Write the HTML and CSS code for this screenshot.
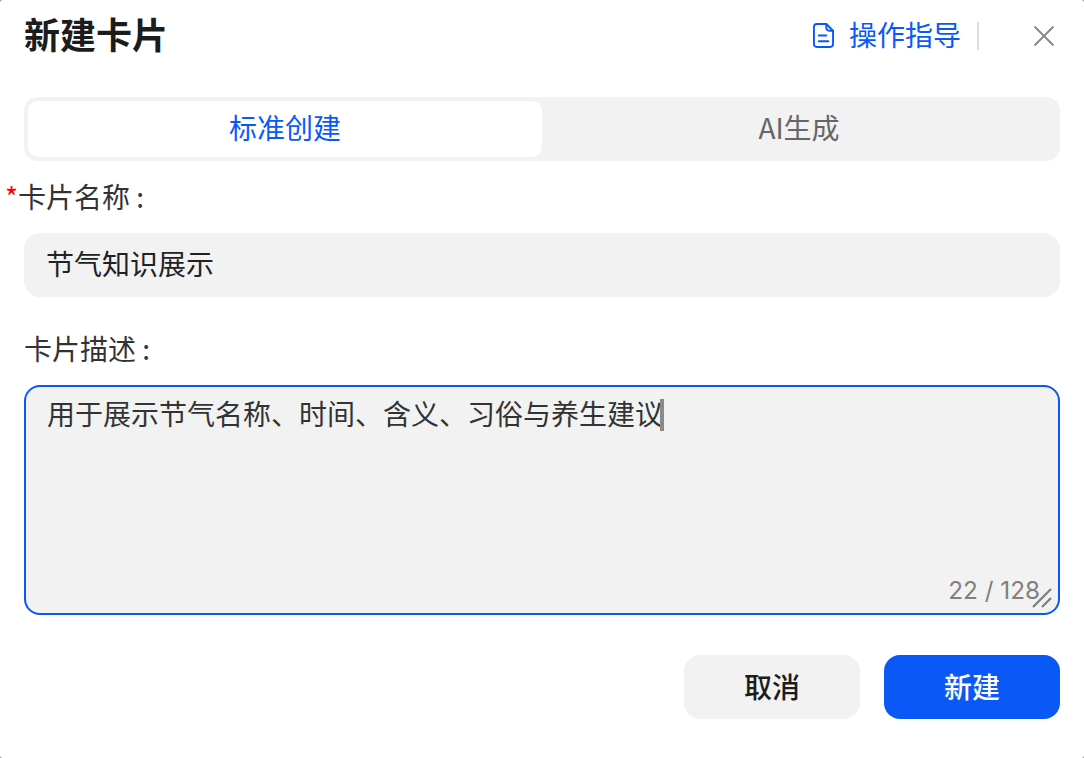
FILE: index.html
```html
<!DOCTYPE html>
<html lang="zh-CN">
<head>
<meta charset="utf-8">
<title>新建卡片</title>
<link rel="stylesheet" href="styles.css">
</head>
<body>
<main class="dialog">
  <header class="header">
    <h1 class="title">新建卡片</h1>
    <div class="actions">
      <a class="guide">
        <svg class="guide-icon" viewBox="0 0 22 26" fill="none" stroke="currentColor" stroke-width="2" stroke-linejoin="round" stroke-linecap="round">
          <path d="M4 1h10l7 7v14a3 3 0 0 1-3 3H4a3 3 0 0 1-3-3V4a3 3 0 0 1 3-3z"/>
          <path d="M14 1v4a3 3 0 0 0 3 3h4"/>
          <path d="M6 13h8M6 19h10"/>
        </svg>
        <span>操作指导</span>
      </a>
      <span class="divider"></span>
      <svg class="close" viewBox="0 0 20 20" fill="none" stroke="#8a8a8a" stroke-width="2">
        <path d="M0.5 0.5l19 19M19.5 0.5l-19 19"/>
      </svg>
    </div>
  </header>

  <div class="tabs">
    <div class="tab tab-active">标准创建</div>
    <div class="tab">AI生成</div>
  </div>

  <div class="label label-required"><span class="star">*</span>卡片名称 :</div>
  <div class="input">节气知识展示</div>

  <div class="label label-second">卡片描述 :</div>
  <div class="textarea">
    <div class="textarea-text">用于展示节气名称、时间、含义、习俗与养生建议<span class="caret"></span></div>
    <span class="counter">22 / 128</span>
    <svg class="resize" viewBox="0 0 20 20" fill="none" stroke="#808080" stroke-width="2.4">
      <path d="M1 19L19 1M10 19L19 10"/>
    </svg>
  </div>

  <footer class="footer">
    <button class="btn btn-cancel">取消</button>
    <button class="btn btn-primary">新建</button>
  </footer>
</main>
</body>
</html>
```
FILE: styles.css
```css
* { box-sizing: border-box; }

html, body {
  margin: 0;
  height: 100%;
  background: #9a9a9a;
}

body {
  font-family: "Noto Sans CJK SC", "Inter", sans-serif;
  color: #2b2b2b;
  overflow: hidden;
}

.dialog {
  width: 1084px;
  height: 758px;
  padding: 0 24px;
  display: flex;
  flex-direction: column;
  background: #fff;
  border-radius: 3px;
}

.header {
  height: 97px;
  padding-bottom: 26px;
  display: flex;
  align-items: center;
  justify-content: space-between;
}

.title {
  margin: 0 0 4px;
  font-size: 36px;
  line-height: 67px;
  font-weight: 700;
  color: #1c1c1c;
}

.actions {
  display: flex;
  align-items: center;
}

.guide {
  display: flex;
  align-items: center;
  gap: 15px;
  color: #0a59f7;
  font-size: 28px;
  line-height: 36px;
  padding-bottom: 4px;
}

.guide-icon {
  width: 21px;
  height: 25px;
  margin-top: 4px;
}

.divider {
  width: 2px;
  height: 28px;
  margin-left: 16px;
  background: #d9dde3;
}

.close {
  width: 20px;
  height: 20px;
  margin-left: 55px;
  margin-right: 6px;
}

.tabs {
  height: 64px;
  padding: 4px;
  border-radius: 14px;
  background: #f2f2f2;
  display: grid;
  grid-template-columns: 1fr 1fr;
}

.tab {
  font-size: 28px;
  line-height: 52px;
  text-align: center;
  color: #666;
  border-radius: 10px;
}

.tab-active {
  background: #fff;
  color: #0a59f7;
}

.label {
  font-size: 28px;
  line-height: 36px;
  color: #333;
}

.label-required {
  margin-top: 17px;
  margin-left: -19px;
  margin-bottom: 3px;
}

.label-second {
  margin-top: 33px;
  margin-bottom: 3px;
}

.star {
  color: #f00;
}

.input {
  margin-top: 16px;
  height: 64px;
  padding: 0 22px;
  border-radius: 16px;
  background: #f2f2f2;
  font-size: 28px;
  line-height: 60px;
  color: #222;
}

.textarea {
  position: relative;
  margin-top: 16px;
  height: 230px;
  padding: 6px 21px;
  border: 2px solid #0a59f7;
  border-radius: 16px;
  background: #f2f2f2;
  font-size: 28px;
  line-height: 40px;
  color: #333;
}

.textarea-text {
  display: flex;
  align-items: center;
}

.caret {
  flex: none;
  width: 4px;
  height: 32px;
  margin-left: -3px;
  margin-top: 4px;
  background: #8a8a8a;
}

.counter {
  position: absolute;
  right: 18px;
  bottom: 7px;
  font-family: "Inter", sans-serif;
  font-size: 24.3px;
  line-height: 32px;
  color: #808080;
}

.resize {
  position: absolute;
  right: 6px;
  bottom: 5px;
  width: 20px;
  height: 20px;
}

.footer {
  margin-top: 40px;
  display: flex;
  justify-content: flex-end;
  gap: 24px;
}

.btn {
  width: 176px;
  height: 64px;
  border: 0;
  padding: 0 0 2px;
  border-radius: 16px;
  font-family: inherit;
  font-size: 28px;
}

.btn-cancel {
  background: #f2f2f2;
  color: #1c1c1c;
  font-weight: 500;
}

.btn-primary {
  background: #0a59f7;
  color: #fff;
  font-weight: 500;
}
```
